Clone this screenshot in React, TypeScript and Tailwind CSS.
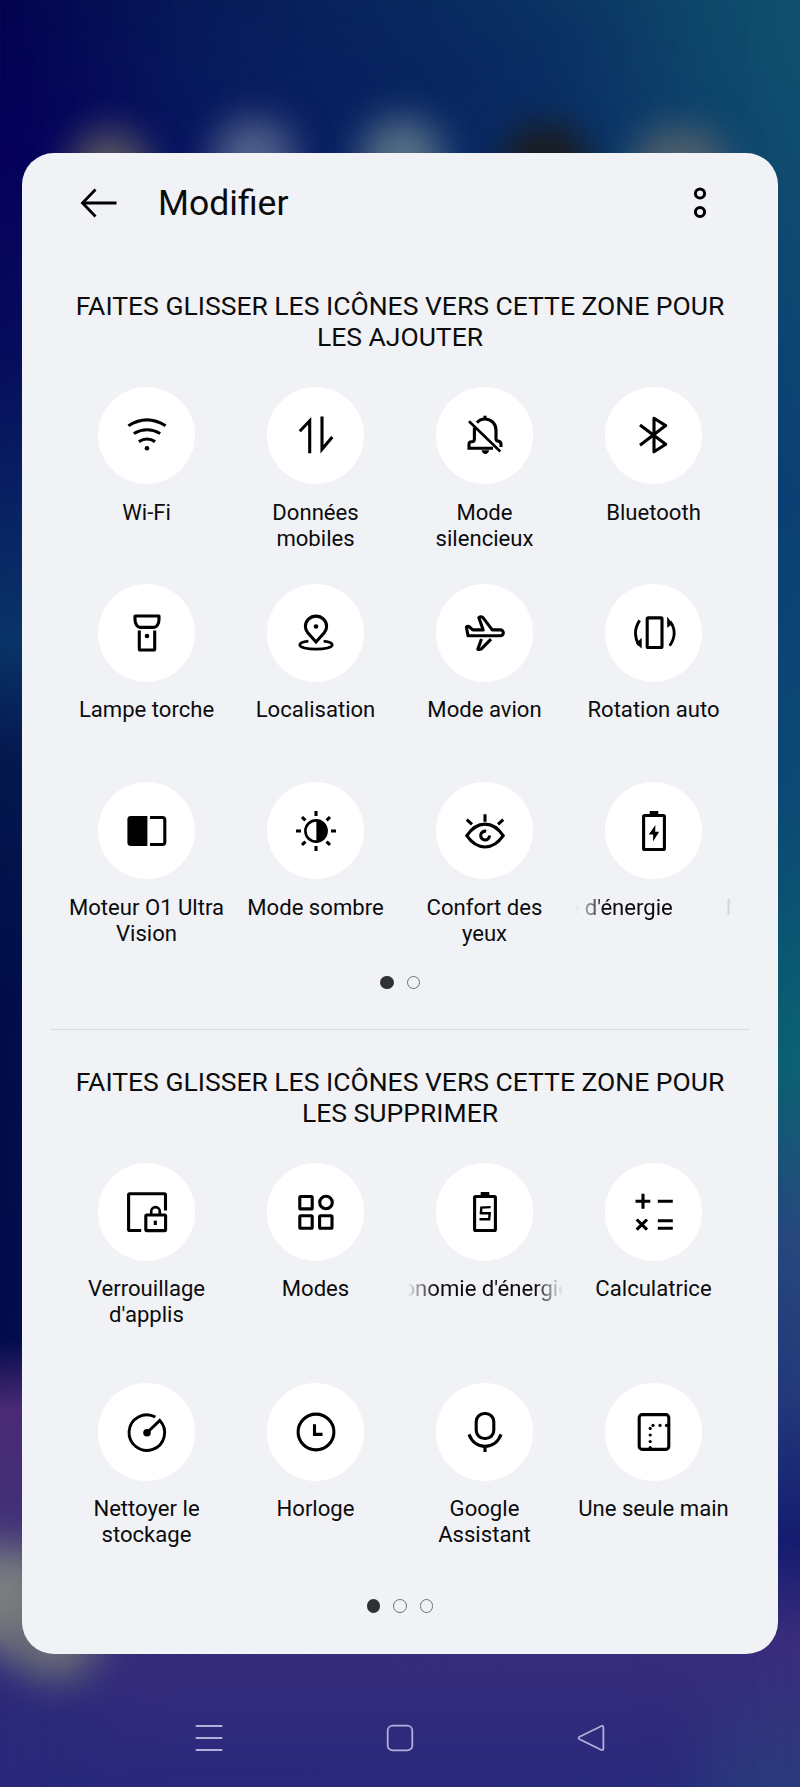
import type { ReactNode } from "react";

type Tile = {
  label: ReactNode;
  icon: ReactNode;
  scrolling?: boolean;
};

// icons are drawn around the origin, on a 48px box
const Icon = ({ children }: { children: ReactNode }) => (
  <svg
    width="48"
    height="48"
    viewBox="-24 -24 48 48"
    fill="none"
    stroke="#000"
    strokeWidth="3.1"
  >
    {children}
  </svg>
);

const Dot = ({ x, y, r = 2.3 }: { x: number; y: number; r?: number }) => (
  <circle cx={x} cy={y} r={r} fill="#000" stroke="none" />
);

const Battery = ({ children }: { children: ReactNode }) => (
  <Icon>
    <path d="M-4.3-20H4.3V-16H-4.3Z" fill="#000" stroke="none" />
    <rect x="-10.4" y="-15.5" width="20.8" height="34" rx="1" />
    {children}
  </Icon>
);

const activeTiles: Tile[] = [
  {
    label: "Wi-Fi",
    icon: (
      <Icon>
        <path d="M-18.6-9.3Q0-20.9 18.6-9.3M-13.2-1.5Q0-8.9 13.2-1.5M-8.1 6.6Q0 1.4 8.1 6.6" />
        <Dot x={0} y={13.3} />
      </Icon>
    ),
  },
  {
    label: "Données\nmobiles",
    icon: (
      <Icon>
        <path d="M-16.2-3.8L-6.3-14.2V18.2M6-18.5V14.2L16.3 2" />
      </Icon>
    ),
  },
  {
    label: "Mode\nsilencieux",
    icon: (
      <Icon>
        <path d="M-16-13.7L15.3 16.5" strokeWidth="2.6" />
        <path d="M0-19.3V-15" />
        <path d="M-8-12.2C-6-14.8-3-16-.2-16C6.2-16 11-11.2 11-5V3.8Q11 5.9 13 6.1Q16 6.6 16 9.2V12" />
        <path d="M-10.6-7.6V4Q-10.6 6.8-13.4 6.8Q-16 6.8-16 9.4V13.2H8" />
        <path d="M-3.5 15.3H4.3Q3.2 19 .4 19Q-2.4 19-3.5 15.3Z" fill="#000" stroke="none" />
      </Icon>
    ),
  },
  {
    label: "Bluetooth",
    icon: (
      <Icon>
        <path d="M-14-10L11.7 9.2L0 16.8V-16.8L11.7-9.4L-14 10.2" strokeLinejoin="round" />
      </Icon>
    ),
  },
  {
    label: "Lampe torche",
    icon: (
      <Icon>
        <path
          d="M-12-17H12V-13.5C12-9 9.5-5.6 7-5.6H-7C-9.5-5.6-12-9-12-13.5Z"
          strokeLinejoin="round"
        />
        <path d="M-7.7-2.5V16Q-7.7 17-6.7 17H6.7Q7.7 17 7.7 16V-2.5" />
        <Dot x={0} y={3} />
      </Icon>
    ),
  },
  {
    label: "Localisation",
    icon: (
      <Icon>
        <path d="M0 9L-8.2-.2C-10-2.4-10.6-4.4-10.6-6.6A10.6 10.3 0 0 1 10.6-6.6C10.6-4.4 10-2.4 8.2-.2Z" />
        <Dot x={0} y={-6.5} />
        <path
          d="M-7.6 8.2C-12.5 8.7-16.2 10.2-16.2 12.1C-16.2 14.4-9 16.2 0 16.2S16.2 14.4 16.2 12.1C16.2 10.2 12.5 8.7 7.6 8.2"
          strokeWidth="2.8"
        />
      </Icon>
    ),
  },
  {
    label: "Mode avion",
    icon: (
      <Icon>
        <path
          d="M-17 2.8L-18.6-6Q-17-7.2-15.8-6.2L-12.2-3.1H-1.8L-6.2-15.4Q-4.2-17-2.2-15.6L7.2-3.1H15.4A2.95 2.95 0 0 1 15.4 2.8Z"
          strokeLinejoin="round"
        />
        <path d="M-3.5 6L-7.2 16.2Q-5.5 16.8-3.6 15.9L6 6.2" strokeLinejoin="round" />
      </Icon>
    ),
  },
  {
    label: "Rotation auto",
    icon: (
      <Icon>
        <rect x="-6.8" y="-15.1" width="14.8" height="29.6" rx="1" />
        <path d="M-14.3-12.6Q-22.4-.5-15 12M15.7 12.8Q24.4 0 16.2-11.5" strokeWidth="2.8" />
        <path
          d="M-12.3 4.8V15.6L-18 10.4ZM13.2-16.5V-5.2L18.6-9Z"
          fill="#000"
          stroke="none"
        />
      </Icon>
    ),
  },
  {
    label: "Moteur O1 Ultra\nVision",
    icon: (
      <Icon>
        <path
          d="M.4-15H-16.2A3.4 3.4 0 0 0-19.6-11.6V11.6A3.4 3.4 0 0 0-16.2 15H.4Z"
          fill="#000"
          stroke="none"
        />
        <path d="M3-13.5H15.4A2.4 2.4 0 0 1 17.8-11.1V11.1A2.4 2.4 0 0 1 15.4 13.5H3" />
      </Icon>
    ),
  },
  {
    label: "Mode sombre",
    icon: (
      <Icon>
        <circle r="10.6" strokeWidth="2.6" />
        <path d="M.4-10.6A10.6 10.6 0 0 1 .4 10.6Z" fill="#000" stroke="none" />
        <path d="M0-20V-15M0 15V20M-20 0H-15M15 0H20M-14-14L-10.6-10.6M14-14L10.6-10.6M-14 14L-10.6 10.6M14 14L10.6 10.6" />
      </Icon>
    ),
  },
  {
    label: "Confort des\nyeux",
    icon: (
      <Icon>
        <path d="M0-16.8V-9.2M-18.2-11.4L-13-6.6M18.2-11.4L13-6.6" />
        <path d="M-18.2 4.7C-8-10.8 8-10.8 18.2 4.7C8 19.7-8 19.7-18.2 4.7Z" />
        <path d="M1.2 .3A4.4 4.4 0 1 0 4.5 4.6" />
      </Icon>
    ),
  },
  {
    label: (
      <>
        <span className="-ml-[8px]">e d'énergie</span>
        <span className="ml-[53px]">M</span>
      </>
    ),
    scrolling: true,
    icon: (
      <Battery>
        <path d="M1.4-6L-5.2 3.6H-.8L-1 10.6L5.2 .8H1.2Z" fill="#000" stroke="none" />
      </Battery>
    ),
  },
];

const availableTiles: Tile[] = [
  {
    label: "Verrouillage\nd'applis",
    icon: (
      <Icon>
        <path d="M-5.8 18.5H-17.3Q-18.4 18.5-18.4 17.4V-17.2Q-18.4-18.3-17.3-18.3H17.4Q18.5-18.3 18.5-17.2V-1.6" />
        <rect x="-1.2" y="3" width="19.8" height="15.6" rx="1" />
        <path d="M4.2 2V-.6A4.2 4.2 0 0 1 12.8-.6V2" strokeWidth="2.6" />
        <path d="M8.3 8.6V13" />
      </Icon>
    ),
  },
  {
    label: "Modes",
    icon: (
      <Icon>
        <rect x="-16.2" y="-15.5" width="12.4" height="12.4" rx="1" />
        <circle cx="10" cy="-9.5" r="6.3" />
        <rect x="-16.2" y="3.8" width="12.4" height="12.4" rx="1" />
        <rect x="3.6" y="3.8" width="12.4" height="12.4" rx="1" />
      </Icon>
    ),
  },
  {
    label: <span className="-ml-[4px]">onomie d'énergie</span>,
    scrolling: true,
    icon: (
      <Battery>
        <path d="M5.6-4.9L-3.7-4.4L-4.1 1.3H4.7L4.2 7.2H-5.5" strokeWidth="2.4" />
      </Battery>
    ),
  },
  {
    label: "Calculatrice",
    icon: (
      <Icon>
        <path d="M-18.5-10.7H-3.7M-11-18.2V-3.2M3.8-10.7H18.8M-17.3 7.5L-7 17.7M-7 7.5L-17.3 17.7M3.8 8.7H18.8M3.8 16.2H18.8" />
      </Icon>
    ),
  },
  {
    label: "Nettoyer le\nstockage",
    icon: (
      <Icon>
        <path d="M8.4-15A17.8 17.8 0 1 0 12.8-11.6L0 .8" strokeWidth="2.9" />
        <Dot x={0} y={0.8} r={3.8} />
      </Icon>
    ),
  },
  {
    label: "Horloge",
    icon: (
      <Icon>
        <circle r="17.9" />
        <path d="M-1.5-7.8V2.4H6.5" />
      </Icon>
    ),
  },
  {
    label: "Google\nAssistant",
    icon: (
      <Icon>
        <rect x="-8.8" y="-18.5" width="17.6" height="25" rx="8.3" />
        <path d="M-16 2.4C-13.2 10 -7 14.4 0 14.4S13.2 10 16 2.4M0 14.4V20" />
      </Icon>
    ),
  },
  {
    label: "Une seule main",
    icon: (
      <Icon>
        <rect x="-14.8" y="-17.4" width="29.6" height="34.8" rx="3" />
        <Dot x={-1} y={-6.6} r={1.6} />
        <Dot x={6} y={-6.6} r={1.6} />
        <Dot x={12.5} y={-6.6} r={1.6} />
        <Dot x={-3.8} y={-3.6} r={1.6} />
        <Dot x={-3.8} y={3} r={1.6} />
        <Dot x={-3.8} y={9.5} r={1.6} />
        <Dot x={-3.8} y={15.5} r={1.6} />
      </Icon>
    ),
  },
];

const TileItem = ({ tile }: { tile: Tile }) => (
  <div className="flex flex-col items-center">
    <div className="flex size-[97.5px] items-center justify-center rounded-full bg-white">
      {tile.icon}
    </div>
    {tile.scrolling ? (
      <div className="mt-[14.5px] flex w-[156px] overflow-hidden whitespace-nowrap text-[22.1px] leading-[26px] [mask-image:linear-gradient(to_right,transparent,black_28px,black_128px,transparent)]">
        {tile.label}
      </div>
    ) : (
      <div className="mt-[14.5px] whitespace-pre text-center text-[22.1px] leading-[26px]">
        {tile.label}
      </div>
    )}
  </div>
);

const Pager = ({ count }: { count: number }) => (
  <div className="flex justify-center gap-[13px]">
    {Array.from({ length: count }, (_, i) => (
      <span
        key={i}
        className={
          i === 0
            ? "size-[13.5px] rounded-full bg-[#303133]"
            : "size-[13.5px] rounded-full border border-[#6f7072]"
        }
      />
    ))}
  </div>
);

const SectionTitle = ({ children }: { children: ReactNode }) => (
  <h2 className="whitespace-pre text-center text-[26.5px] leading-[31px]">{children}</h2>
);

const Wallpaper = () => (
  <div className="absolute inset-0 overflow-hidden">
    <div className="absolute inset-0 bg-[linear-gradient(180deg,#040450_0px,#06005c_150px,#070c5c_350px,#0a3468_640px,#05174e_760px,#020d48_1000px,#030c4c_1340px,#4c2a76_1410px,#443078_1500px,#2f2a7a_1660px,#28287c_1787px)]" />
    <div className="absolute inset-0 bg-[linear-gradient(180deg,#10526e_0px,#0f4a70_200px,#0b4074_500px,#0c4a74_800px,#0a6272_1060px,#28487e_1240px,#22397a_1400px,#141c70_1540px,#3a2c7c_1640px,#2a3a7c_1787px)] [mask-image:linear-gradient(to_right,transparent,black)]" />
    <div className="absolute top-0 left-[150px] h-[150px] w-[450px] bg-[#07225f]/60 blur-3xl" />
    <div className="absolute top-[1640px] left-[100px] h-[170px] w-[600px] bg-[linear-gradient(180deg,#3a2d7b,#25277c)] blur-xl" />
    <div className="absolute top-[130px] left-[70px] size-[80px] rounded-full bg-[#5a5560] blur-[18px]" />
    <div className="absolute top-[118px] left-[212px] size-[84px] rounded-full bg-[#52608a] blur-[18px]" />
    <div className="absolute top-[118px] left-[360px] size-[84px] rounded-full bg-[#567086] blur-[18px]" />
    <div className="absolute top-[124px] left-[502px] size-[88px] rounded-full bg-[#1a1a1a] blur-[18px]" />
    <div className="absolute top-[128px] left-[632px] h-[84px] w-[96px] rounded-full bg-[#50606c] blur-[18px]" />
    <div className="absolute top-[1545px] -left-[50px] h-[105px] w-[110px] rounded-full bg-[#7b8080] blur-[20px]" />
    <div className="absolute top-[1590px] left-[10px] h-[90px] w-[90px] rounded-full bg-[#6e7276] blur-[20px]" />
  </div>
);

const App = () => {
  return (
    <div className="relative h-[1787px] w-[800px] overflow-hidden font-[Roboto,sans-serif] text-[#0c0c0d]">
      <Wallpaper />
      <div className="relative flex h-full flex-col px-[22px] pt-[153px]">
        <main className="h-[1501px] rounded-[32px] bg-[#f0f2f6]">
          <header className="flex h-[100px] items-center pr-[71px] pl-[58px]">
            <svg width="37" height="30" viewBox="0 0 37 30" fill="none" stroke="#000" strokeWidth="2.8">
              <path d="M15.5 1.5L2.5 15L15.5 28.5M2.5 15H36.5" />
            </svg>
            <h1 className="ml-[41px] text-[35.5px] leading-10">Modifier</h1>
            <svg
              className="ml-auto"
              width="14"
              height="32"
              viewBox="0 0 14 32"
              fill="none"
              stroke="#000"
              strokeWidth="3"
            >
              <circle cx="7" cy="6.5" r="4.6" />
              <circle cx="7" cy="25" r="4.6" />
            </svg>
          </header>

          <section className="px-10 pt-[37px]">
            <SectionTitle>{"FAITES GLISSER LES ICÔNES VERS CETTE ZONE POUR\nLES AJOUTER"}</SectionTitle>
            <div className="mt-[34.5px] grid h-[589px] grid-cols-4 grid-rows-[197.7px_197.7px_1fr]">
              {activeTiles.map((tile, i) => (
                <TileItem key={i} tile={tile} />
              ))}
            </div>
            <Pager count={2} />
          </section>

          <hr className="mx-7 mt-10 border-[#d9dbdf]" />

          <section className="px-10 pt-9">
            <SectionTitle>{"FAITES GLISSER LES ICÔNES VERS CETTE ZONE POUR\nLES SUPPRIMER"}</SectionTitle>
            <div className="mt-[35px] grid h-[436px] grid-cols-4 grid-rows-[220px_1fr]">
              {availableTiles.map((tile, i) => (
                <TileItem key={i} tile={tile} />
              ))}
            </div>
            <Pager count={3} />
          </section>
        </main>

        <nav className="flex flex-1 items-center justify-center gap-[163px] pt-[35px]">
          <svg width="28" height="28" viewBox="0 0 28 28" fill="none" stroke="#b3b0d9" strokeWidth="2">
            <path d="M.7 2H27.3M.7 14H27.3M.7 26H27.3" />
          </svg>
          <svg width="28" height="28" viewBox="0 0 28 28" fill="none" stroke="#b3b0d9" strokeWidth="1.8">
            <rect x="1.7" y="1.7" width="24.6" height="24.6" rx="5" />
          </svg>
          <svg width="28" height="28" viewBox="0 0 28 28" fill="none" stroke="#b3b0d9" strokeWidth="1.8">
            <path d="M24 2.2Q26.4 1 26.4 4V24Q26.4 27 24 25.8L2.6 15.3Q.4 14 2.6 12.7Z" />
          </svg>
        </nav>
      </div>
    </div>
  );
};

export default App;
